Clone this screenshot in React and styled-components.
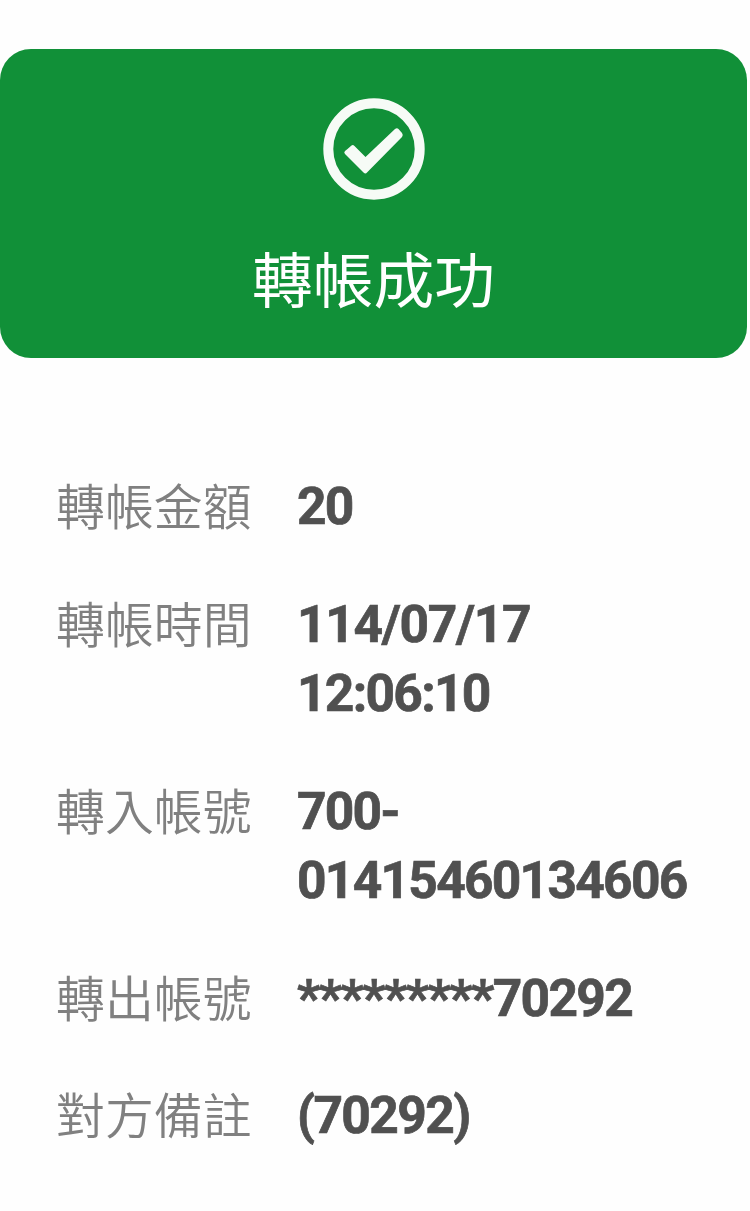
import React from "react";
import styled, { createGlobalStyle } from "styled-components";

const GlobalStyle = createGlobalStyle`
  *, *::before, *::after { box-sizing: border-box; }
  body {
    margin: 0;
    background: #fefefe;
    font-family: Roboto, "Noto Sans CJK TC", sans-serif;
  }
`;

const Page = styled.main`
  width: 750px;
  height: 1211px;
  padding-top: 49px;
  overflow: hidden;
`;

const Banner = styled.header`
  display: flex;
  flex-direction: column;
  align-items: center;
  width: 747px;
  height: 308.5px;
  padding-top: 49px;
  border-radius: 31px;
  background: #119038;
`;

const CheckIcon = styled.svg`
  display: block;
  width: 102px;
  height: 102px;
`;

const Title = styled.h1`
  margin: 38px 0 0;
  color: #fff;
  font-size: 60.8px;
  font-weight: 400;
  line-height: 90px;
`;

const Details = styled.dl`
  display: flex;
  flex-direction: column;
  gap: 48px;
  margin: 0;
  padding: 114.5px 0 0 56px;
`;

const Row = styled.div`
  display: flex;
`;

const Label = styled.dt`
  width: 241px;
  height: 69.5px;
  flex: none;
  color: #808080;
  font-size: 48.9px;
  font-weight: 350;
  line-height: 73px;
`;

const Value = styled.dd`
  margin: 0;
  color: #505050;
  font-size: 51.5px;
  font-weight: 700;
  line-height: 69.5px;
  white-space: nowrap;
  -webkit-text-stroke: 0.7px currentColor;
`;

const Line = styled.div`
  letter-spacing: ${({ $tracking }) => $tracking}px;
`;

const rows = [
  { label: "轉帳金額", lines: [{ text: "20", tracking: -1.7 }] },
  {
    label: "轉帳時間",
    lines: [
      { text: "114/07/17", tracking: -1.3 },
      { text: "12:06:10", tracking: -1.7 },
    ],
  },
  {
    label: "轉入帳號",
    lines: [
      { text: "700-", tracking: -1.8 },
      { text: "01415460134606", tracking: -1.72 },
    ],
  },
  { label: "轉出帳號", lines: [{ text: "*********70292", tracking: -1.65 }] },
  { label: "對方備註", lines: [{ text: "(70292)", tracking: -1.6 }] },
];

export default function App() {
  return (
    <>
      <GlobalStyle />
      <Page>
        <Banner>
          <CheckIcon viewBox="0 0 102 102" aria-hidden="true">
            <circle cx="51" cy="51" r="45.7" fill="none" stroke="#f6fbf6" strokeWidth="10" />
            <path
              d="M24.5 51 L28.5 47.5 Q30 46.5 31.5 48 L42.5 59 L72 31 Q74 29.5 75.5 31 L79 35 Q80.5 37 79 39 L44 74.5 Q42.5 76.5 40.5 74.5 L22 56 Q20.5 54.5 22 53 Z"
              fill="#f6fbf6"
            />
          </CheckIcon>
          <Title>轉帳成功</Title>
        </Banner>
        <Details>
          {rows.map(({ label, lines }) => (
            <Row key={label}>
              <Label>{label}</Label>
              <Value>
                {lines.map(({ text, tracking }) => (
                  <Line key={text} $tracking={tracking}>
                    {text}
                  </Line>
                ))}
              </Value>
            </Row>
          ))}
        </Details>
      </Page>
    </>
  );
}
